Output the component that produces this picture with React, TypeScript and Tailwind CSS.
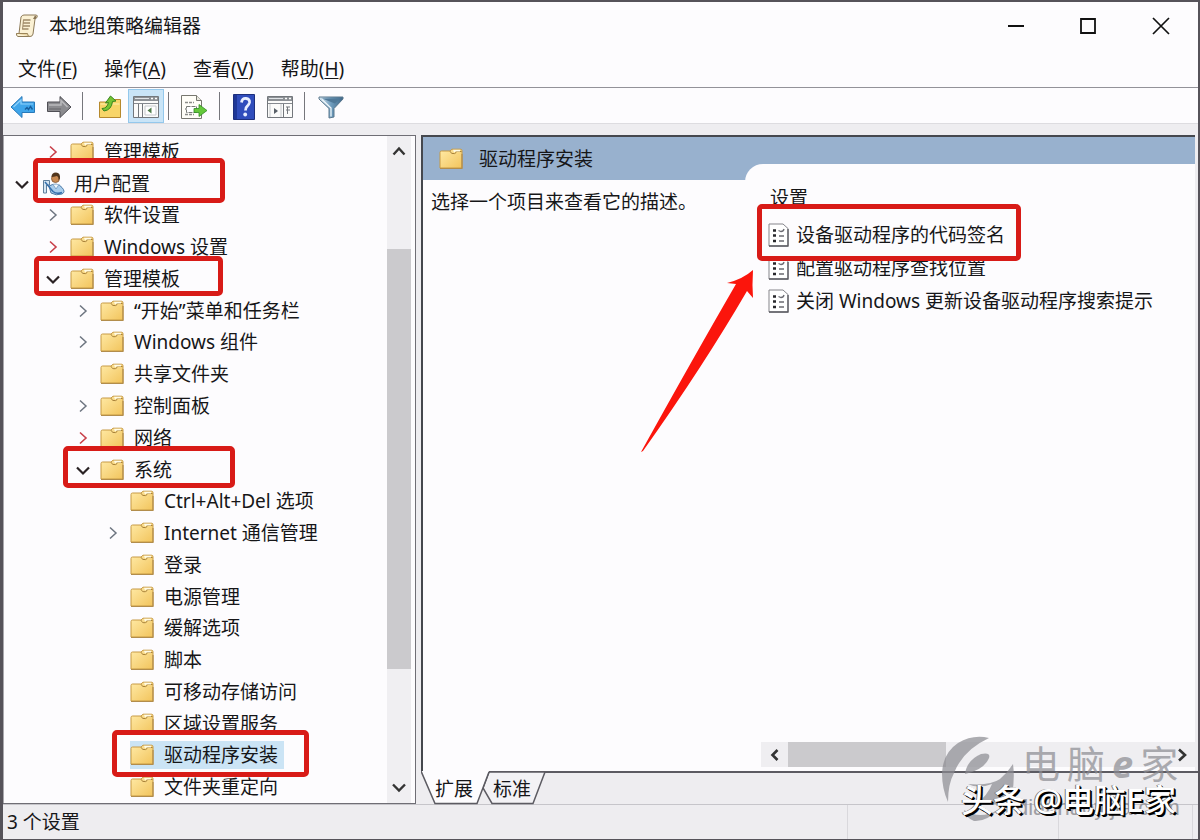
import React from "react";

type Mark = string | undefined;

interface Node {
  label: string;
  level: 0 | 1 | 2 | 3;
  state?: "open" | "closed";
  hot?: boolean;
  user?: boolean;
  selected?: boolean;
  mark?: Mark;
}

const indents = ["pl-2", "pl-[39px]", "pl-[69px]", "pl-[99px]"];

const nodes: Node[] = [
  { label: "管理模板", level: 1, state: "closed", hot: true },
  { label: "用户配置", level: 0, state: "open", user: true, mark: "left-[29px] -top-[10px] h-[45px] w-48" },
  { label: "软件设置", level: 1, state: "closed" },
  { label: "Windows 设置", level: 1, state: "closed", hot: true },
  { label: "管理模板", level: 1, state: "open", mark: "left-[30px] -top-[7px] h-10 w-[189px]" },
  { label: "“开始”菜单和任务栏", level: 2, state: "closed" },
  { label: "Windows 组件", level: 2, state: "closed" },
  { label: "共享文件夹", level: 2 },
  { label: "控制面板", level: 2, state: "closed" },
  { label: "网络", level: 2, state: "closed", hot: true },
  { label: "系统", level: 2, state: "open", mark: "left-[59px] -top-2 h-[42px] w-[172px]" },
  { label: "Ctrl+Alt+Del 选项", level: 3 },
  { label: "Internet 通信管理", level: 3, state: "closed" },
  { label: "登录", level: 3 },
  { label: "电源管理", level: 3 },
  { label: "缓解选项", level: 3 },
  { label: "脚本", level: 3 },
  { label: "可移动存储访问", level: 3 },
  { label: "区域设置服务", level: 3 },
  { label: "驱动程序安装", level: 3, selected: true, mark: "left-[108px] -top-[10px] h-[47px] w-[197px]" },
  { label: "文件夹重定向", level: 3 },
];

const settings: { label: string; mark?: Mark }[] = [
  { label: "设备驱动程序的代码签名", mark: "-left-[11px] -top-[17px] h-[57px] w-[264px]" },
  { label: "配置驱动程序查找位置" },
  { label: "关闭 Windows 更新设备驱动程序搜索提示" },
];

const menus = [
  { label: "文件", key: "F" },
  { label: "操作", key: "A" },
  { label: "查看", key: "V" },
  { label: "帮助", key: "H" },
];

function MarkBox({ place }: { place: string }) {
  return (
    <span
      aria-hidden="true"
      className={`pointer-events-none absolute z-10 rounded-[5px] border-[5px] border-[#d81b17] ${place}`}
    />
  );
}

function Folder() {
  return (
    <svg viewBox="0 0 24 22" className="h-[22px] w-6 shrink-0" aria-hidden="true">
      <defs>
        <linearGradient id="folderFace" x1="0" y1="0" x2="1" y2="1">
          <stop offset="0" stopColor="#ffeaa6" />
          <stop offset="1" stopColor="#f2c45c" />
        </linearGradient>
      </defs>
      <path d="M1 4.500Q1 3 2.500 3H11l2-1.800h8.500q1.500 0 1.500 1.500V20H1Z" fill="url(#folderFace)" stroke="#c79a45" />
      <path d="M11 3.200q1 3.200 4.500 2.400 2-.600 1.500-2.100H22.500" fill="none" stroke="#a98239" />
      <path d="M14 1.800h7v1.700h-4.500l-1.500 1z" fill="#fffbe6" />
      <path d="M1 20.500h22V6" fill="none" stroke="#b28d4c" strokeWidth="1.200" />
    </svg>
  );
}

function UserIcon() {
  return (
    <svg viewBox="0 0 24 24" className="size-6 shrink-0" aria-hidden="true">
      <path d="M7 14q8-4.500 13 1.500 4 4.500 0 6.500-6 2-11-1Z" fill="#a9cdec" stroke="#4c7aa6" />
      <path d="M11 12.500 14 17l3-4.500" fill="#eef6fc" stroke="#6f97bd" strokeWidth=".8" />
      <circle cx="13.500" cy="6.500" r="4" fill="#c98a52" stroke="#81532d" strokeWidth=".8" />
      <path d="M9.500 5q0-4.500 4.500-4.500t4 6L16.500 8q.5-3-1.500-4Q11.500 5 9.500 5Z" fill="#51351d" />
      <path d="M1.500 8.500h6v4.500h-3v8h-3Z" fill="#d5e5f2" stroke="#5f7f9c" />
      <path d="m3 10 8 9.500q3.500 3 9 1" fill="none" stroke="#356fac" strokeWidth="1.500" />
    </svg>
  );
}

function Chevron({ dir, className = "" }: { dir: "up" | "down" | "left" | "right"; className?: string }) {
  const paths = {
    up: "m4.500 12.500 5.500-6 5.500 6",
    down: "m4 7.500 6 6 6-6",
    left: "m12.500 5-5 5 5 5",
    right: "m7 4.500 6 5.500-6 5.500",
  };
  return (
    <svg viewBox="0 0 20 20" className={`size-5 shrink-0 ${className}`} aria-hidden="true">
      <path d={paths[dir]} fill="none" stroke="currentColor" />
    </svg>
  );
}

function TreeRow({ node }: { node: Node }) {
  return (
    <li
      role="treeitem"
      aria-selected={!!node.selected}
      aria-expanded={node.state ? node.state === "open" : undefined}
      className={`relative flex min-h-0 flex-1 items-center ${indents[node.level]}`}
    >
      <span className="flex w-[27px] shrink-0 items-center">
        {node.state === "open" && <Chevron dir="down" className="stroke-[2.2] text-[#2a2224]" />}
        {node.state === "closed" && (
          <Chevron dir="right" className={node.hot ? "stroke-[1.6] text-[#c8404a]" : "stroke-[1.5] text-[#6d7580]"} />
        )}
      </span>
      <button
        type="button"
        className={`flex h-7 items-center whitespace-nowrap ${node.user ? "gap-2 pl-[3px]" : "gap-[10px]"} ${
          node.selected ? "bg-[#cbe4f5] pr-[6px]" : ""
        }`}
      >
        {node.user ? <UserIcon /> : <Folder />}
        {node.label}
      </button>
      {node.mark && <MarkBox place={node.mark} />}
    </li>
  );
}

function ScrollIcon() {
  return (
    <svg viewBox="0 0 24 24" className="size-6" aria-hidden="true">
      <path d="M6 3Q7 1 9 1h12q2 0 1 2.500L20 5l-2 15q-.5 2.500-3 2.500H3q-2-.5-1.500-3H4Z" fill="#fbf1d4" stroke="#8d7a58" />
      <path d="M20 1.500q2.500 1 .5 3.500h-2.500Z" fill="#8a7656" />
      <path d="M1.500 19.500h11q0 3 2.500 3" fill="#e9d5a4" stroke="#9c8458" />
      <path d="M8.500 6h7M8 9h7M8 12h7M7.500 15h6" stroke="#a08a68" strokeWidth="1.300" />
      <path d="M8.500 5.500 7.500 15.500" stroke="#a08a68" />
    </svg>
  );
}

function Arrow({ back }: { back?: boolean }) {
  return back ? (
    <svg viewBox="0 0 26 24" className="h-6 w-[26px]" aria-hidden="true">
      <path d="M1 12 12 1.500V7h12.500v10.500H12V22.500Z" fill="#3fa5ea" stroke="#2879b9" />
      <path d="M3.500 12 11 5v4h12" fill="none" stroke="#8dd0fa" strokeWidth="1.200" />
      <path d="M15 14.500l2-2 1.500 2 2-3 2 3" fill="none" stroke="#175f9f" strokeWidth="1.400" />
    </svg>
  ) : (
    <svg viewBox="0 0 26 24" className="h-6 w-[26px]" aria-hidden="true">
      <path d="M25 12 14 1.500V7H1.500v9.500H14v6Z" fill="#8b8b8f" stroke="#4f4f55" />
      <path d="M3 10h12V5.500L21.500 12" fill="none" stroke="#bababd" strokeWidth="1.500" />
      <path d="M3 14h12" stroke="#6c6c70" strokeWidth="1.200" />
    </svg>
  );
}

function UpFolder() {
  return (
    <svg viewBox="0 0 24 24" className="size-6" aria-hidden="true">
      <path d="M1.500 7H9l2-2.500h11.500v18h-21Z" fill="#f8d568" stroke="#b6892d" />
      <path d="M2.500 9h19" stroke="#fff0ae" />
      <path d="M4 13.500q5 0 6.500-6l-3 .5L12.500 1l5.500 5-3.500.5Q13.500 15 6 16Z" fill="#75c434" stroke="#37851d" />
    </svg>
  );
}

function PaneIcon({ right }: { right?: boolean }) {
  return (
    <svg viewBox="0 0 26 22" className="h-[22px] w-[26px]" aria-hidden="true">
      <path d="M.5.500h25v21H.5Z" fill="#fbfbfa" stroke="#73777c" />
      <path d="M1 1h24v4H1Z" fill="#8c9095" />
      <path d="M2 2.500h14" stroke="#e1e4e8" />
      <path d="M18 2.500h2M22 2.500h2" stroke="#fff" strokeWidth="1.500" />
      <path d="M1 7.500h24" stroke="#85898f" />
      {right ? (
        <>
          <path d="M16.500 8v13" stroke="#73777c" />
          <path d="M3 8v13M14 8v13" stroke="#c6c9cd" />
          <path d="m7 12 4 3-4 3Z" fill="#596068" />
          <path d="M19 11h4M19 14h4M20.500 11v7" stroke="#73777c" />
        </>
      ) : (
        <>
          <path d="M9.500 8v13M5.500 8v13" stroke="#73777c" />
          <path d="M12 10h11v9H12Z" fill="#fff" stroke="#c6c9cd" />
          <path d="m18.500 11.500-4 3 4 3Z" fill="#4f7c49" />
        </>
      )}
    </svg>
  );
}

function ExportIcon() {
  return (
    <svg viewBox="0 0 28 26" className="h-[26px] w-7" aria-hidden="true">
      <path d="M1.500 1.500h15l5 5v18h-20Z" fill="#fffef8" stroke="#77776f" />
      <path d="M16.500 1.500v5h5" fill="#e8e8df" stroke="#77776f" />
      <path d="M5 8.500h9M5 15h1.500M5 20.500h9" stroke="#8b8d89" strokeWidth="1.300" strokeDasharray="3 1" />
      <path d="M6.500 12.500h10v6h-10Z" fill="#fff" stroke="#777a76" strokeDasharray="4 1" />
      <path d="M14 14.500h5v-4l8 6-8 6v-4h-5Z" fill="#65c93b" stroke="#318b24" strokeWidth=".8" />
    </svg>
  );
}

function HelpIcon() {
  return (
    <svg viewBox="0 0 22 26" className="h-[26px] w-[22px]" aria-hidden="true">
      <path d="M.500.500h21v25H.500Z" fill="#304dbc" stroke="#1d2f7d" />
      <path d="M1 1h3v24H1Z" fill="#1f3797" />
      <path d="M8.500 8.500Q9 4 13 4.500q4 .5 3.500 4-.5 2-2.500 4-1.500 1-1.500 4" fill="none" stroke="#e9efff" strokeWidth="2.800" />
      <circle cx="12.200" cy="20.500" r="1.900" fill="#e9efff" />
    </svg>
  );
}

function FilterIcon() {
  return (
    <svg viewBox="0 0 26 24" className="h-6 w-[26px]" aria-hidden="true">
      <defs>
        <linearGradient id="funnel" x1="0" x2="1">
          <stop offset="0" stopColor="#dceaf3" />
          <stop offset=".5" stopColor="#6f9cbd" />
          <stop offset="1" stopColor="#3f6788" />
        </linearGradient>
      </defs>
      <path d="M1 2h24v2l-9 9.500V22l-5 1V13.500L1 4Z" fill="url(#funnel)" stroke="#5b788e" />
      <path d="M4 3.500h18l-5 5Z" fill="#4f7898" />
      <path d="M4 4.500l9 8.500v8.500" fill="none" stroke="#f0f7fb" strokeWidth="1.300" />
    </svg>
  );
}

function PolicyIcon() {
  return (
    <svg viewBox="0 0 21 24" className="h-6 w-[21px] shrink-0" aria-hidden="true">
      <path d="M1 1h14l5 4.500V23H1Z" fill="#fff" stroke="#85858b" />
      <path d="M1 23h19V6" fill="none" stroke="#5b5b61" strokeWidth="1.300" />
      <path d="M5 7.500h3M5 12.500h3M5 18h3" stroke="#28282c" strokeWidth="2.600" />
      <path d="M10.500 7.500l2.500 1q2.500 0 3-2.500M11 13h5M11 18h5" fill="none" stroke="#6b6b72" strokeWidth="1.300" />
    </svg>
  );
}

function ToolButton({ label, active, children }: { label: string; active?: boolean; children: React.ReactNode }) {
  return (
    <button
      type="button"
      aria-label={label}
      className={`flex h-[34px] w-9 items-center justify-center pt-[2px] ${active ? "border border-[#94c8ec] bg-[#c9e4f7]" : ""}`}
    >
      {children}
    </button>
  );
}

function Divider() {
  return <span className="h-7 w-px shrink-0 bg-[#76767c]" />;
}

function Watermark() {
  return (
    <div className="pointer-events-none absolute bottom-0 right-0 z-20 h-[104px] w-[260px]">
      <svg viewBox="0 0 78 88" className="absolute left-0 top-0 h-[88px] w-[78px] text-[#8b8b91] opacity-70" aria-hidden="true">
        <path d="M51 3Q35-1 20 8 5 18 4 38q0 16 6 29 0-18 6-29Q25 15 51 3Z" fill="currentColor" />
        <path d="M27 39Q29 25 43 19q10-2 8 4-5 12-24 16Z" fill="currentColor" />
        <path d="M30 49Q52 51 62 44q8-7 13-15 2 14-1 32l-10 8H38q12-9 16-20-14 5-24 0Z" fill="currentColor" />
        <path d="M26 75q16 10 34 0-12 12-24 11-8-3-10-11Z" fill="currentColor" />
      </svg>
      <p className="absolute left-[84px] top-1 flex gap-[7px] whitespace-nowrap text-[38px] leading-[48px] text-[#8b8b91] opacity-70">
        <span>电</span>
        <span>脑</span>
        <span className="font-bold italic">e</span>
        <span>家</span>
      </p>
      <p className="absolute left-[78px] top-[59px] whitespace-nowrap font-['Liberation_Sans',sans-serif] text-[22px] leading-7 text-[#8b8b91] opacity-80">
        diannaoyijia.com
      </p>
      <p className="absolute left-[23px] top-[45px] whitespace-nowrap text-[32px] font-medium leading-10 text-white [text-shadow:2px_2px_0_#000,1px_1px_0_#000,-1px_0_0_#777]">
        头条 @电脑E家
      </p>
    </div>
  );
}

export default function App() {
  return (
    <div className="relative flex min-h-screen flex-col overflow-hidden border-2 border-b border-l-[3px] border-[#56535a] bg-[#fdfcfe] font-['Noto_Sans','Noto_Sans_CJK_SC',sans-serif] text-[19px] leading-7 text-[#161618]">
      <header className="flex h-12 items-center justify-between pl-3">
        <div className="flex items-center gap-[10px]">
          <ScrollIcon />
          <h1>本地组策略编辑器</h1>
        </div>
        <div className="flex">
          <button type="button" aria-label="最小化" className="flex h-11 w-[72px] items-center justify-center">
            <svg viewBox="0 0 18 18" className="size-[18px]"><path d="M1 9h16" stroke="#111" strokeWidth="2" /></svg>
          </button>
          <button type="button" aria-label="最大化" className="flex h-11 w-[72px] items-center justify-center">
            <svg viewBox="0 0 18 18" className="size-[18px]"><path d="M2 2h14v14H2Z" fill="none" stroke="#111" strokeWidth="1.800" /></svg>
          </button>
          <button type="button" aria-label="关闭" className="flex h-11 w-[74px] items-center justify-center">
            <svg viewBox="0 0 18 18" className="size-[18px]"><path d="m1 1 16 16M17 1 1 17" stroke="#111" strokeWidth="1.700" /></svg>
          </button>
        </div>
      </header>

      <nav className="flex h-[38px] items-center gap-[27px] border-b border-[#939299] pl-[15px]">
        {menus.map((m) => (
          <button type="button" key={m.key} className="whitespace-nowrap">
            {m.label}(<span className="underline underline-offset-2">{m.key}</span>)
          </button>
        ))}
      </nav>

      <div role="toolbar" className="flex h-[35px] items-end pl-[2px]">
        <ToolButton label="后退"><Arrow back /></ToolButton>
        <ToolButton label="前进"><Arrow /></ToolButton>
        <div className="flex items-center pl-[5px]">
          <Divider />
          <div className="flex pl-[9px]">
            <ToolButton label="上一级"><UpFolder /></ToolButton>
            <ToolButton label="显示控制台树" active><PaneIcon /></ToolButton>
          </div>
        </div>
        <div className="flex items-center pl-1">
          <Divider />
          <div className="px-[7px]"><ToolButton label="导出列表"><ExportIcon /></ToolButton></div>
          <Divider />
          <div className="flex px-[6px]">
            <ToolButton label="帮助"><HelpIcon /></ToolButton>
            <ToolButton label="显示操作窗格"><PaneIcon right /></ToolButton>
          </div>
          <Divider />
          <div className="pl-2"><ToolButton label="筛选器"><FilterIcon /></ToolButton></div>
        </div>
      </div>

      <div className="h-3 border-t border-[#dddce0] bg-[#eeedf0]" />

      <main className="flex flex-1 bg-[#eeedf0]">
        <section className="flex w-[413px] shrink-0 border border-l-0 border-[#6f6e75] bg-[#fdfcfe]">
          <ul role="tree" aria-label="控制台树" className="flex flex-1 flex-col overflow-hidden border-l border-[#a9a8ad]">
            {nodes.map((n, i) => (
              <TreeRow key={i} node={n} />
            ))}
          </ul>
          <div className="mr-1 flex w-6 flex-col items-center bg-[#f0eff2]">
            <button type="button" aria-label="向上滚动" className="flex h-8 items-center">
              <Chevron dir="up" className="stroke-[2.4] text-[#333]" />
            </button>
            <div className="flex w-full flex-1 flex-col">
              <div className="flex-[81]" />
              <div className="flex-[420] bg-[#cbcacd]" />
              <div className="flex-[102]" />
            </div>
            <button type="button" aria-label="向下滚动" className="flex h-8 items-center">
              <Chevron dir="down" className="stroke-[2.4] text-[#333]" />
            </button>
          </div>
        </section>

        <section className="relative ml-[5px] flex min-w-0 flex-1 flex-col">
          <div className="mr-[3px] flex flex-1 flex-col border-l-2 border-t-2 border-[#45484e] bg-[#fdfcfe]">
            <div className="flex h-[43px] items-center gap-4 bg-[#98b1ce] pl-4">
              <Folder />
              <h2>驱动程序安装</h2>
            </div>
            <div className="flex flex-1">
              <p className="w-[322px] shrink-0 pl-2 pt-2">选择一个项目来查看它的描述。</p>
              <div className="-mt-4 flex min-w-0 flex-1 flex-col rounded-tl-[18px] bg-[#fdfcfe] pl-[23px] pt-5">
                <h3 className="pl-[2px]">设置</h3>
                <ul className="flex flex-1 flex-col gap-[5px] pt-[9px]">
                  {settings.map((s) => (
                    <li key={s.label} className="relative">
                      <button type="button" className="flex h-7 items-center gap-[7px] whitespace-nowrap">
                        <PolicyIcon />
                        {s.label}
                      </button>
                      {s.mark && <MarkBox place={s.mark} />}
                    </li>
                  ))}
                </ul>
                <div className="-ml-[7px] mb-1 flex h-[25px] items-center bg-[#efeef1]">
                  <button type="button" aria-label="向左滚动" className="flex w-[27px] justify-center">
                    <Chevron dir="left" className="stroke-[2.6] text-[#333]" />
                  </button>
                  <div className="flex h-full flex-1">
                    <div className="flex-[158] bg-[#cbcacd]" />
                    <div className="flex-[222]" />
                  </div>
                  <button type="button" aria-label="向右滚动" className="flex w-[27px] justify-center">
                    <Chevron dir="right" className="stroke-[2.6] text-[#333]" />
                  </button>
                </div>
              </div>
            </div>
          </div>

          <div role="tablist" className="relative flex h-[33px] border-t-2 border-[#5c5b62]">
            <svg viewBox="0 0 126 35" className="absolute -top-[2px] left-0 h-[35px] w-[126px]" aria-hidden="true">
              <path d="M68 1h56l-12 31.500H71L62 17Z" fill="#f3f2f5" stroke="#5c5b62" strokeWidth="1.500" />
              <path d="M0 0h68L56 32.500H14Z" fill="#fdfcfe" />
              <path d="M0 0 14 32.500h42L68 1" fill="none" stroke="#5c5b62" strokeWidth="1.500" />
            </svg>
            <button type="button" role="tab" aria-selected="true" className="relative pl-[14px]">扩展</button>
            <button type="button" role="tab" aria-selected="false" className="relative pl-5">标准</button>
          </div>

          <svg viewBox="0 0 116 184" className="pointer-events-none absolute left-[219px] top-[134px] h-[184px] w-[116px]" aria-hidden="true">
            <path d="M1 183Q56 84 96 15L87 14Q103 10 113 1 112 16 113 29L107 22Q64 96 3 182Z" fill="#fb150c" />
          </svg>
        </section>
      </main>

      <footer className="flex h-[35px] items-center border-t border-[#c6c5ca] bg-[#eeedf0] pl-1">
        <span className="flex-1">3 个设置</span>
        <span className="h-full w-[211px] border-l border-[#d9d8dc]" />
        <span className="h-full w-[135px] border-x border-[#d9d8dc]" />
        <span className="w-[5px]" />
      </footer>

      <Watermark />
    </div>
  );
}
